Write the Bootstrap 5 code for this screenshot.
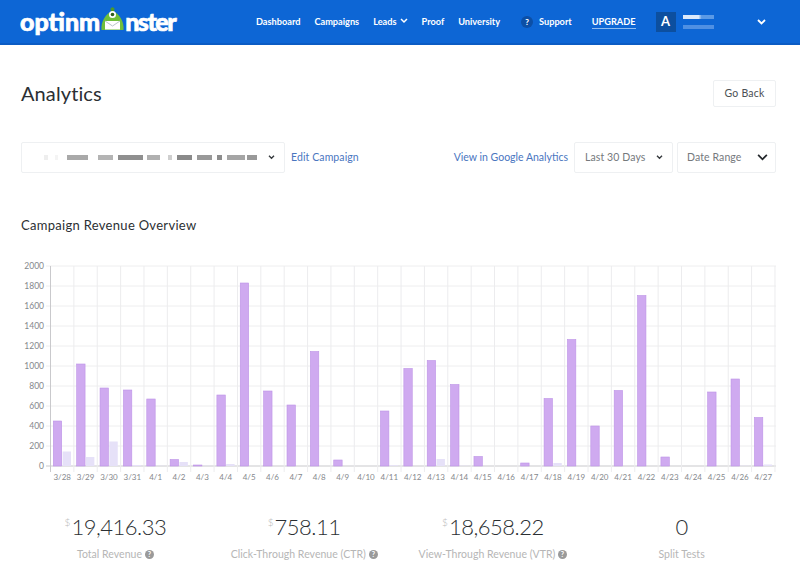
<!DOCTYPE html>
<html lang="en">
<head>
<meta charset="utf-8">
<title>Analytics</title>
<link href="https://cdn.jsdelivr.net/npm/bootstrap@5.3.0/dist/css/bootstrap.min.css" rel="stylesheet">
<style>
html,body{height:100%;overflow:hidden}
body{font-family:"Lato","Liberation Sans",sans-serif;color:#2b2f33;background:#fff}
.om-bar{background:#0d66d5;height:45px;border-bottom:2px solid #0b5cc4;padding:0 0 0 20px}
.om-logo{font-weight:900;font-size:25px;color:#fff;line-height:1;-webkit-text-stroke:.7px #fff;width:236px}
.om-logo svg{margin:-6px 0 0 0}
.om-tail{letter-spacing:-1.500px}
.om-link{color:#fff;font-size:9.200px;font-weight:700;text-decoration:none;line-height:1;white-space:nowrap}
.om-links{gap:14px}
.om-chev{gap:3px}
.om-sup{margin-left:21px;gap:6px}
.om-q{width:12px;height:12px;border-radius:50%;background:#0c4fa6;font-size:8px;font-weight:900;color:#fff}
.om-up{margin-left:20px;border-bottom:1px solid #8fbcf0;padding-bottom:2px;margin-top:3px}
.om-ava{width:20px;height:20px;margin-left:20px;background:#0c4f9f;color:#fff;font-size:13px;font-weight:700}
.om-user{margin-left:7px;width:74px;gap:6px}
.om-blur{display:block;height:4px;background:linear-gradient(90deg,#dbe9fb 0,#dbe9fb 50%,#5b9ae6 60%,#5b9ae6 100%);width:31px}
.om-blur2{display:block;height:4px;background:#4f90e3;width:31px}
.om-main{padding:0 24px 0 21px}
.om-head{padding-top:35px;height:80px}
.om-h1{font-size:20px;font-weight:400;margin:0;line-height:28px;letter-spacing:.1px;margin-top:-1px}
.om-btn{background:#fff;border:1px solid #eef0f2;border-radius:2px;color:#4b5054;font-size:10.500px;width:63px;padding:0;height:27px;letter-spacing:.2px}
.om-filter{margin-top:17px;height:31px}
.om-sel{background:#fff;border:1px solid #eef0f2;border-radius:2px;color:#75797d;font-size:10.500px;height:31px;letter-spacing:.1px}
.om-camp{width:264px;padding:0 9px 0 21px}
.om-days{width:99px;padding:0 9px 0 10px}
.om-range{width:99px;padding:0 7px 0 9px;margin-left:4px}
.om-a{color:#4a76bf;font-size:10.500px;text-decoration:none;white-space:nowrap}
.om-edit{margin-left:6px;letter-spacing:.1px}
.om-ga{margin-right:6px}
.om-pix{gap:0;height:6px;flex:1}
.om-pix i{display:block;height:5px;flex:none}
.om-sect{font-size:13px;font-weight:400;margin:43px 0 0;line-height:18px;letter-spacing:.3px}
.om-chart{display:block;margin:24px 0 0 -21px;width:800px;height:228px}
.om-stats{margin-top:26px}
.om-num{font-size:22px;line-height:30px;color:#2b2f33;font-weight:300;letter-spacing:-.5px}
.om-cur{font-size:10px;color:#b4b4b4;vertical-align:9px;line-height:0;margin-right:1px;letter-spacing:0}
.om-lab{font-size:10.500px;color:#b6b6b6;line-height:14px;margin-top:5px;letter-spacing:.03px}
.om-help{width:9px;height:9px;vertical-align:-1px}
.om-chart text{font-family:"Lato","Liberation Sans",sans-serif;font-size:8.500px;fill:#85888c}
.om-chart .om-x{font-size:8px}
.om-g1{width:4px;background:#eee;margin-left:1px}
.om-g2{width:3px;background:#f4f4f4;margin-left:7px}
.om-p1{width:21px;background:#a9a9a9;margin-left:9px}
.om-p2{width:15px;background:#b4b4b4;margin-left:10px}
.om-p3{width:25px;background:#8f8f8f;margin-left:5px}
.om-p4{width:13px;background:#b0b0b0;margin-left:4px}
.om-p5{width:4px;background:#cfcfcf;margin-left:8px}
.om-p6{width:15px;background:#8a8a8a;margin-left:5px}
.om-p7{width:15px;background:#999;margin-left:5px}
.om-p8{width:5px;background:#8d8d8d;margin-left:5px}
.om-p9{width:18px;background:#a5a5a5;margin-left:5px}
.om-p10{width:10px;background:#999;margin-left:2px}
</style>
</head>
<body>
<nav class="navbar navbar-expand om-bar d-flex align-items-center flex-nowrap justify-content-start">
  <a class="om-logo text-decoration-none d-flex align-items-center" href="#">optinm<svg width="25" height="24" viewBox="0 0 25 24"><path d="M1.500 23C.5 15 6 6 12.500 4 19 6 24.500 15 23.500 23Z" fill="#6fbf3a"/><path d="M10.500 1.500l2-1.500 2 1.500-.5 3h-3Z" fill="#4c9a2a"/><circle cx="12.500" cy="7.500" r="3.500" fill="#fff"/><circle cx="12.500" cy="7.500" r="1.800" fill="#2d5d1b"/><path d="M5 14h15v8.500H5Z" fill="#fff"/><path d="M5 14l7.500 5 7.500-5" fill="none" stroke="#b9c4cc" stroke-width="1"/></svg><span class="om-tail">nster</span></a>
  <div class="d-flex align-items-center om-links">
    <a class="om-link" href="#">Dashboard</a>
    <a class="om-link" href="#">Campaigns</a>
    <a class="om-link d-flex align-items-center om-chev" href="#">Leads <svg width="8" height="6" viewBox="0 0 8 6"><path d="M1 1l3 3 3-3" fill="none" stroke="#fff" stroke-width="1.500"/></svg></a>
    <a class="om-link" href="#">Proof</a>
    <a class="om-link" href="#">University</a>
  </div>
  <a class="om-link d-flex align-items-center om-sup" href="#"><span class="om-q d-flex align-items-center justify-content-center">?</span>Support</a>
  <a class="om-link om-up" href="#">UPGRADE</a>
  <span class="om-ava d-flex align-items-center justify-content-center">A</span>
  <span class="om-user d-flex flex-column"><span class="om-blur"></span><span class="om-blur2"></span></span>
  <svg width="9" height="6" viewBox="0 0 9 6"><path d="M1 1l3.500 3.500L8 1" fill="none" stroke="#fff" stroke-width="1.800"/></svg>
</nav>

<main class="om-main">
  <div class="d-flex justify-content-between align-items-start om-head">
    <h1 class="om-h1">Analytics</h1>
    <button class="om-btn" type="button">Go Back</button>
  </div>

  <div class="d-flex align-items-center justify-content-between om-filter">
    <div class="d-flex align-items-center">
      <div class="om-sel om-camp d-flex align-items-center">
        <div class="om-pix d-flex align-items-center">
          <i class="om-g1"></i><i class="om-g2"></i><i class="om-p1"></i><i class="om-p2"></i><i class="om-p3"></i><i class="om-p4"></i><i class="om-p5"></i><i class="om-p6"></i><i class="om-p7"></i><i class="om-p8"></i><i class="om-p9"></i><i class="om-p10"></i>
        </div>
        <svg width="7" height="5" viewBox="0 0 8 6"><path d="M1 1l3 3 3-3" fill="none" stroke="#33373b" stroke-width="1.600"/></svg>
      </div>
      <a class="om-a om-edit" href="#">Edit Campaign</a>
    </div>
    <div class="d-flex align-items-center">
      <a class="om-a om-ga" href="#">View in Google Analytics</a>
      <div class="om-sel om-days d-flex align-items-center justify-content-between">Last 30 Days <svg width="7" height="5" viewBox="0 0 8 6"><path d="M1 1l3 3 3-3" fill="none" stroke="#33373b" stroke-width="1.600"/></svg></div>
      <div class="om-sel om-range d-flex align-items-center justify-content-between">Date Range <svg width="11" height="7" viewBox="0 0 12 8"><path d="M1 1l5 5 5-5" fill="none" stroke="#23272b" stroke-width="2"/></svg></div>
    </div>
  </div>

  <h2 class="om-sect">Campaign Revenue Overview</h2>

  <svg class="om-chart" id="revchart" viewBox="0 258 800 228" role="img" aria-label="Campaign revenue bar chart"></svg>

  <div class="row g-0 text-center om-stats">
    <div class="col-3"><div class="om-num"><span class="om-cur">$</span>19,416.33</div><div class="om-lab">Total Revenue <svg class="om-help" viewBox="0 0 10 10"><circle cx="5" cy="5" r="5" fill="#9a9a9a"/><text x="5" y="8" font-size="8" font-weight="700" text-anchor="middle" fill="#fff">?</text></svg></div></div>
    <div class="col-3"><div class="om-num"><span class="om-cur">$</span>758.11</div><div class="om-lab">Click-Through Revenue (CTR) <svg class="om-help" viewBox="0 0 10 10"><circle cx="5" cy="5" r="5" fill="#9a9a9a"/><text x="5" y="8" font-size="8" font-weight="700" text-anchor="middle" fill="#fff">?</text></svg></div></div>
    <div class="col-3"><div class="om-num"><span class="om-cur">$</span>18,658.22</div><div class="om-lab">View-Through Revenue (VTR) <svg class="om-help" viewBox="0 0 10 10"><circle cx="5" cy="5" r="5" fill="#9a9a9a"/><text x="5" y="8" font-size="8" font-weight="700" text-anchor="middle" fill="#fff">?</text></svg></div></div>
    <div class="col-3"><div class="om-num">0</div><div class="om-lab">Split Tests</div></div>
  </div>
</main>

<script>
(function(){
  var days=['3/28','3/29','3/30','3/31','4/1','4/2','4/3','4/4','4/5','4/6','4/7','4/8','4/9','4/10','4/11','4/12','4/13','4/14','4/15','4/16','4/17','4/18','4/19','4/20','4/21','4/22','4/23','4/24','4/25','4/26','4/27'];
  var a=[450,1020,780,760,670,65,10,710,1830,750,610,1145,60,0,550,975,1055,815,95,0,30,675,1265,400,755,1705,90,0,740,870,485];
  var b=[145,90,245,10,2,40,2,20,0,0,0,0,0,0,8,0,70,3,0,0,0,30,0,0,0,0,0,0,0,3,15];
  var x0=50.5,w=23.37,y0=466,s='';
  for(var v=0;v<=2000;v+=200){
    var y=y0-v/10;
    s+='<line x1="46" x2="776" y1="'+y+'" y2="'+y+'" stroke="'+(v?'#eeeeef':'#c9c9cc')+'"/>';
    s+='<text x="44" y="'+(y+3)+'" text-anchor="end">'+v+'</text>';
  }
  for(var i=0;i<=31;i++){
    var x=x0+i*w;
    s+='<line x1="'+x+'" x2="'+x+'" y1="266" y2="472" stroke="'+(i?'#ececee':'#c9c9cc')+'"/>';
  }
  for(i=0;i<31;i++){
    x=x0+i*w;
    if(a[i])s+='<rect x="'+(x+2.8)+'" y="'+(y0-a[i]/10)+'" width="8.4" height="'+(a[i]/10)+'" fill="#cfaaf0" stroke="#bd93e6" stroke-width=".6"/>';
    if(b[i])s+='<rect x="'+(x+12.1)+'" y="'+(y0-b[i]/10)+'" width="8.4" height="'+(b[i]/10)+'" fill="#e6e1f8"/>';
    s+='<text class="om-x" x="'+(x+w/2)+'" y="480" text-anchor="middle">'+days[i]+'</text>';
  }
  document.getElementById('revchart').innerHTML=s;
})();
</script>
<script src="https://cdn.jsdelivr.net/npm/bootstrap@5.3.0/dist/js/bootstrap.bundle.min.js"></script>
</body>
</html>
